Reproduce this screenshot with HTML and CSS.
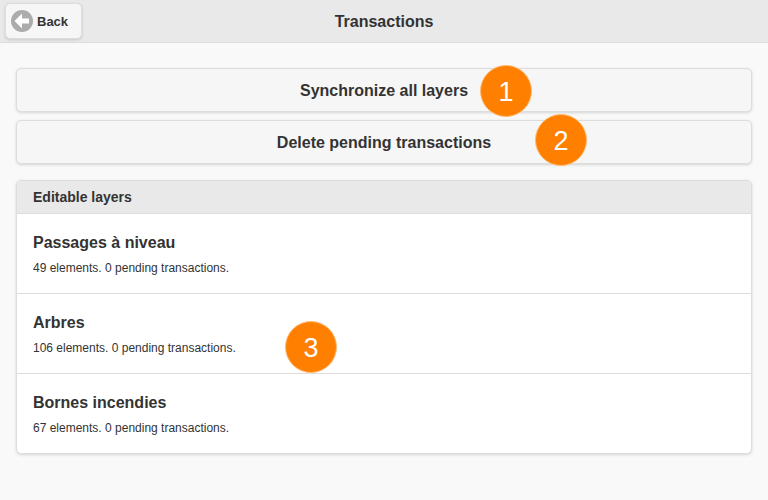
FILE: index.html
```
<!DOCTYPE html>
<html lang="en">
<head>
  <meta charset="UTF-8">
  <meta name="viewport" content="width=device-width, initial-scale=1.0">
  <title>Transactions</title>
  <link rel="stylesheet" href="styles.css">
</head>
<body>

  <header class="header">
    <button class="back" type="button">
      <svg class="back-icon" viewBox="0 0 22 22" aria-hidden="true">
        <circle cx="11" cy="11" r="11" fill="#acacac"/>
        <path d="M3.5 11 L11 3.5 V8.5 H18 V13.5 H11 V18.5 Z" fill="#fff"/>
      </svg>
      Back
    </button>
    <h1 class="title">Transactions</h1>
  </header>

  <main class="content">
    <div class="actions">
      <div class="action">
        <button class="btn" type="button">Synchronize all layers</button>
        <span class="step step-sync">1</span>
      </div>
      <div class="action">
        <button class="btn" type="button">Delete pending transactions</button>
        <span class="step step-delete">2</span>
      </div>
    </div>

    <ul class="list">
      <li class="divider">Editable layers</li>
      <li class="layer">
        <h2>Passages à niveau</h2>
        <p>49 elements. 0 pending transactions.</p>
      </li>
      <li class="layer">
        <h2>Arbres</h2>
        <p>106 elements. 0 pending transactions.</p>
        <span class="step step-layer">3</span>
      </li>
      <li class="layer">
        <h2>Bornes incendies</h2>
        <p>67 elements. 0 pending transactions.</p>
      </li>
    </ul>
  </main>

</body>
</html>
```
FILE: styles.css
```
* {
  box-sizing: border-box;
}
body {
  margin: 0;
  background-color: #f9f9f9;
  color: #333;
  font-family: "Liberation Sans", Arial, sans-serif;
  font-size: 16px;
}
.header {
  display: grid;
  grid-template-columns: 1fr auto 1fr;
  align-items: center;
  padding: 3px 5px;
  background-color: #e9e9e9;
  border-bottom: 1px solid #ddd;
}
.title {
  margin: 0;
  padding-top: 2px;
  font-size: 16px;
  line-height: 20px;
}
.back,
.btn {
  background-color: #f6f6f6;
  border: 1px solid #ddd;
  border-radius: 5px;
  box-shadow: 0 1px 3px rgba(0, 0, 0, 0.15);
  color: #333;
  font-family: inherit;
  font-weight: bold;
  cursor: pointer;
}
.back {
  display: flex;
  align-items: center;
  justify-self: start;
  gap: 4px;
  height: 36px;
  padding: 0 13px 0 5px;
  font-size: 13px;
}
.back-icon {
  width: 22px;
  height: 22px;
}
.content {
  padding: 25px 16px;
}
/* main buttons */
.actions {
  display: flex;
  flex-direction: column;
  gap: 8px;
}
.action {
  position: relative;
}
.btn {
  display: block;
  width: 100%;
  height: 44px;
  padding: 2px 0 0;
  font-size: 16px;
}
.btn:hover,
.back:hover {
  background-color: #ededed;
}
/* layer list */
.list {
  margin: 16px 0 0;
  padding: 0;
  list-style: none;
  background-color: #fff;
  border: 1px solid #ddd;
  border-radius: 5px;
  box-shadow: 0 1px 3px rgba(0, 0, 0, 0.15);
}
.divider {
  padding: 7px 16px;
  background-color: #e9e9e9;
  border-radius: 4px 4px 0 0;
  font-size: 14px;
  font-weight: bold;
  line-height: 18px;
}
.layer {
  position: relative;
  padding: 19px 16px 17px;
  border-top: 1px solid #ddd;
}
.layer h2 {
  margin: 0 0 7px;
  font-size: 16px;
  line-height: 20px;
}
.layer p {
  margin: 0;
  font-size: 12px;
  line-height: 16px;
}
/* numbered markers */
.step {
  position: absolute;
  display: flex;
  align-items: center;
  justify-content: center;
  width: 52px;
  height: 52px;
  padding-top: 2px;
  background-color: #ff8000;
  border: 1px solid #ffb973;
  border-radius: 50%;
  color: #fff;
  font-size: 27px;
}
.step-sync {
  top: -3px;
  left: calc(50% + 96px);
}
.step-delete {
  top: -6px;
  left: calc(50% + 151px);
}
.step-layer {
  top: 27px;
  left: 268px;
}
```
